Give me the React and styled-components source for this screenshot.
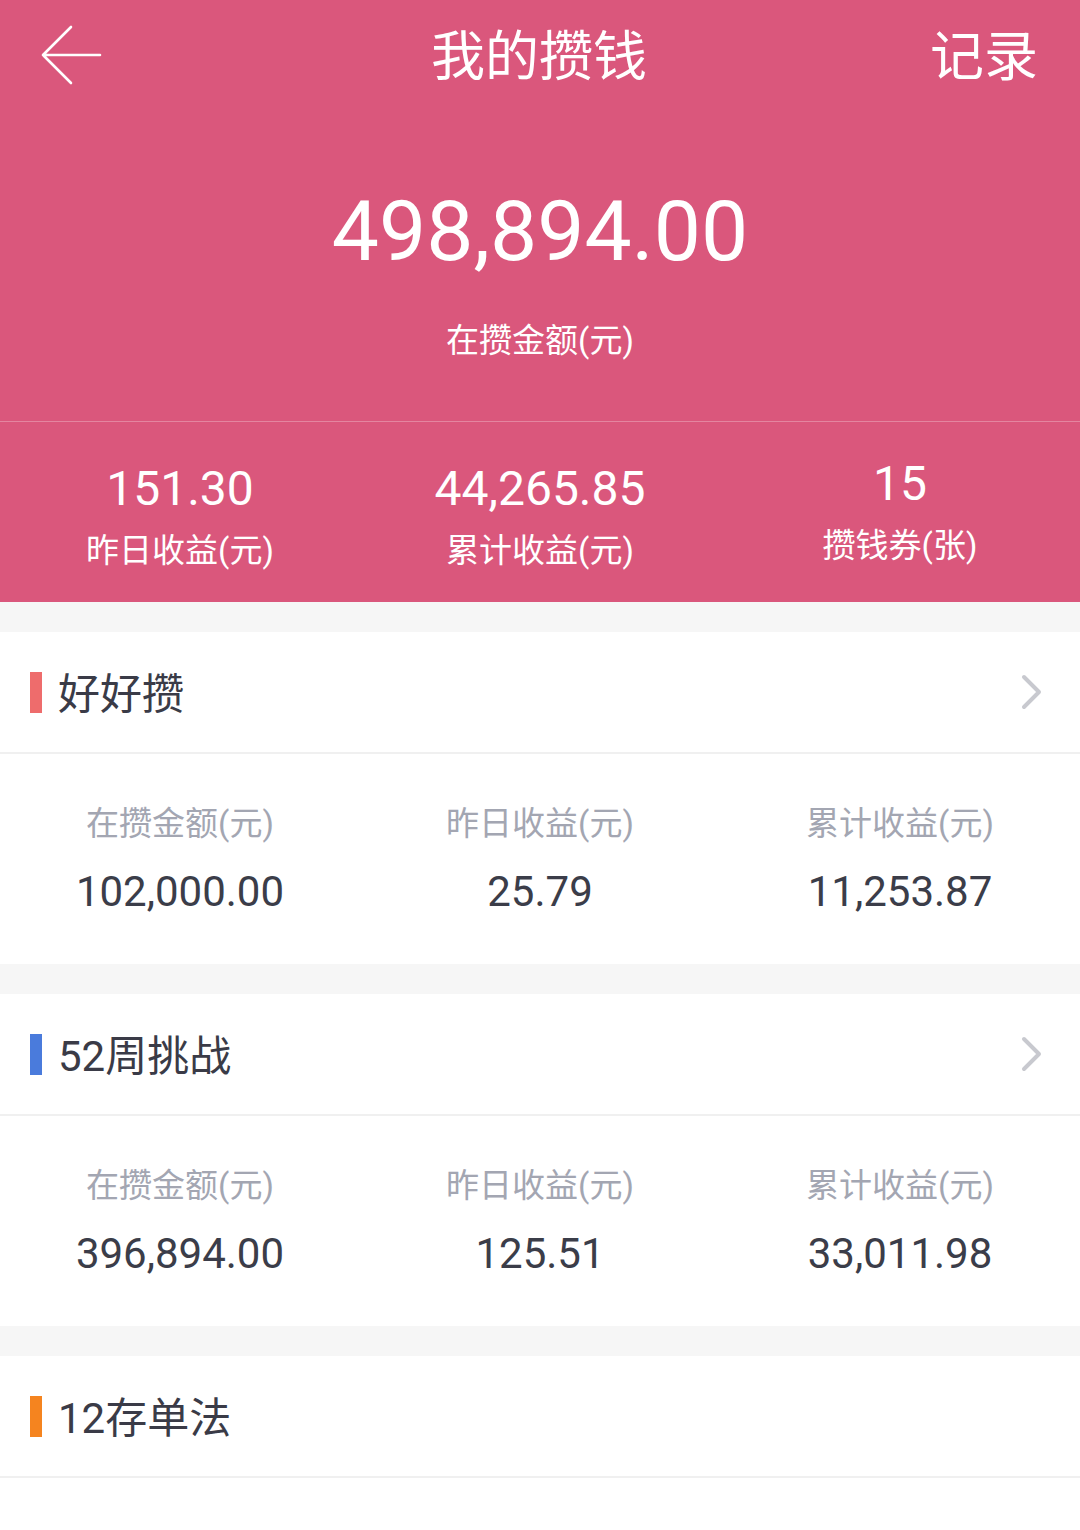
import React from "react";
import styled, { createGlobalStyle } from "styled-components";

const GlobalStyle = createGlobalStyle`
  html, body { margin: 0; padding: 0; background: #ffffff; }
  body { font-family: Roboto, "Noto Sans CJK SC", sans-serif; -webkit-font-smoothing: antialiased; }
  * { box-sizing: border-box; }
`;

const PINK = "#DA577C";

const Page = styled.div`
  width: 1080px;
  min-height: 1530px;
  background: #ffffff;
`;

const Header = styled.header`
  background: ${PINK};
  color: #ffffff;
`;

const NavBar = styled.nav`
  height: 110px;
  display: grid;
  grid-template-columns: 1fr auto 1fr;
  align-items: center;
  padding: 6px 42px 0 40px;
`;

const BackButton = styled.button`
  justify-self: start;
  background: none;
  border: 0;
  padding: 0;
  width: 62px;
  height: 62px;
  margin-top: -6px;
  display: flex;
  align-items: center;
  cursor: pointer;
`;

const NavTitle = styled.h1`
  margin: 0;
  font-size: 54px;
  line-height: 64px;
  font-weight: 400;
  letter-spacing: 0;
`;

const NavAction = styled.span`
  justify-self: end;
  font-size: 54px;
  line-height: 64px;
`;

const Hero = styled.section`
  display: flex;
  flex-direction: column;
  align-items: center;
  padding: 72px 0 60px;
  border-bottom: 1px solid rgba(255, 255, 255, 0.28);
`;

const HeroAmount = styled.div`
  font-size: 84px;
  line-height: 100px;
  letter-spacing: 0;
`;

const HeroLabel = styled.div`
  margin-top: 39px;
  font-size: 33px;
  line-height: 40px;
`;

const StatsRow = styled.div`
  display: grid;
  grid-template-columns: repeat(3, 1fr);
  align-items: start;
  padding: ${(p) => p.$pad};
`;

const StatCell = styled.div`
  display: flex;
  flex-direction: column;
  align-items: center;
  gap: ${(p) => p.$gap}px;
  margin-top: ${(p) => (p.$raised ? "-5px" : "0")};
`;

const HeaderValue = styled.div`
  font-size: 48px;
  line-height: 56px;
`;

const HeaderLabel = styled.div`
  font-size: 33px;
  line-height: 40px;
`;

const Gap = styled.div`
  height: 30px;
  background: #f6f6f6;
`;

const Card = styled.section`
  background: #ffffff;
`;

const CardHeader = styled.div`
  height: 122px;
  display: flex;
  align-items: center;
  padding: 6px 37px 0 30px;
  border-bottom: 2px solid #f0f0f0;
`;

const AccentBar = styled.span`
  width: 12px;
  height: 41px;
  background: ${(p) => p.$color};
  margin-right: 16px;
  margin-top: -6px;
  flex-shrink: 0;
`;

const CardTitle = styled.h2`
  flex: 1;
  margin: 0;
  font-size: 42px;
  line-height: 50px;
  font-weight: 400;
  color: #3a3b47;
`;

const ChevronWrap = styled.span`
  display: flex;
  margin-top: -6px;
`;

const CardLabel = styled.div`
  font-size: 33px;
  line-height: 44px;
  color: #a3a6b2;
`;

const CardValue = styled.div`
  font-size: 42px;
  line-height: 50px;
  color: #3b3d49;
`;

const BackArrow = () => (
  <svg width="62" height="62" viewBox="0 0 62 62" fill="none">
    <path
      d="M60 31 H3 M31 3 L3 31 L31 59"
      stroke="#ffffff"
      strokeWidth="2.6"
      strokeLinecap="round"
      strokeLinejoin="round"
    />
  </svg>
);

const Chevron = () => (
  <svg width="24" height="36" viewBox="0 0 24 36" fill="none">
    <path
      d="M5 3 L20 18 L5 33"
      stroke="#c8c9cf"
      strokeWidth="4"
      strokeLinecap="round"
      strokeLinejoin="round"
    />
  </svg>
);

const headerStats = [
  { value: "151.30", label: "昨日收益(元)" },
  { value: "44,265.85", label: "累计收益(元)" },
  { value: "15", label: "攒钱券(张)", raised: true },
];

const products = [
  {
    title: "好好攒",
    color: "#ee6c6c",
    arrow: true,
    stats: [
      { label: "在攒金额(元)", value: "102,000.00" },
      { label: "昨日收益(元)", value: "25.79" },
      { label: "累计收益(元)", value: "11,253.87" },
    ],
  },
  {
    title: "52周挑战",
    color: "#4a7bdc",
    arrow: true,
    stats: [
      { label: "在攒金额(元)", value: "396,894.00" },
      { label: "昨日收益(元)", value: "125.51" },
      { label: "累计收益(元)", value: "33,011.98" },
    ],
  },
  {
    title: "12存单法",
    color: "#f5841f",
    arrow: false,
    stats: null,
  },
];

export default function App() {
  return (
    <Page>
      <GlobalStyle />
      <Header>
        <NavBar>
          <BackButton aria-label="返回">
            <BackArrow />
          </BackButton>
          <NavTitle>我的攒钱</NavTitle>
          <NavAction>记录</NavAction>
        </NavBar>
        <Hero>
          <HeroAmount>498,894.00</HeroAmount>
          <HeroLabel>在攒金额(元)</HeroLabel>
        </Hero>
        <StatsRow $pad="39px 0 31px">
          {headerStats.map((s) => (
            <StatCell key={s.label} $gap={14} $raised={s.raised}>
              <HeaderValue>{s.value}</HeaderValue>
              <HeaderLabel>{s.label}</HeaderLabel>
            </StatCell>
          ))}
        </StatsRow>
      </Header>
      {products.map((p) => (
        <React.Fragment key={p.title}>
          <Gap />
          <Card>
            <CardHeader>
              <AccentBar $color={p.color} />
              <CardTitle>{p.title}</CardTitle>
              {p.arrow && (
                <ChevronWrap>
                  <Chevron />
                </ChevronWrap>
              )}
            </CardHeader>
            {p.stats && (
              <StatsRow $pad="48px 0 47px">
                {p.stats.map((s) => (
                  <StatCell key={s.label} $gap={21}>
                    <CardLabel>{s.label}</CardLabel>
                    <CardValue>{s.value}</CardValue>
                  </StatCell>
                ))}
              </StatsRow>
            )}
          </Card>
        </React.Fragment>
      ))}
    </Page>
  );
}
